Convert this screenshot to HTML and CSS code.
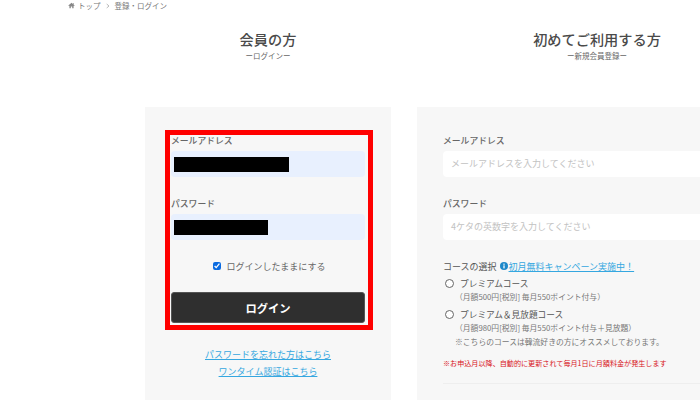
FILE: index.html
```html
<!DOCTYPE html>
<html lang="ja">
<head>
<meta charset="utf-8">
<title>登録・ログイン</title>
<link rel="stylesheet" href="styles.css">
</head>
<body>
<nav class="crumbs">
  <svg class="home" viewBox="0 0 10 10" width="7" height="7"><path d="M5 1 0.5 5 1.3 5.8 2 5.2V9H4V6.5H6V9H8V5.2L8.7 5.8 9.5 5 8 3.7V1.5H7V2.8Z" fill="#888"/></svg>
  <span>トップ</span>
  <svg class="chev" viewBox="0 0 6 8" width="4" height="6"><path d="M1 1 4.5 4 1 7" fill="none" stroke="#999" stroke-width="1"/></svg>
  <span class="crumb-last">登録・ログイン</span>
</nav>
<main class="columns">
  <section class="col col-left">
    <header class="head">
      <h2>会員の方</h2>
      <p>ーログインー</p>
    </header>
    <div class="panel">
      <div class="field">
        <label>メールアドレス</label>
        <div class="input filled"><span class="mask mask-a"></span></div>
      </div>
      <div class="field">
        <label>パスワード</label>
        <div class="input filled"><span class="mask mask-b"></span></div>
      </div>
      <div class="keep"><input type="checkbox" checked><span>ログインしたままにする</span></div>
      <button class="login">ログイン</button>
      <div class="links">
        <a>パスワードを忘れた方はこちら</a>
        <a>ワンタイム認証はこちら</a>
      </div>
      <div class="redbox"></div>
    </div>
  </section>
  <section class="col col-right">
    <header class="head">
      <h2>初めてご利用する方</h2>
      <p>ー新規会員登録ー</p>
    </header>
    <div class="panel">
      <div class="field">
        <label>メールアドレス</label>
        <div class="input">メールアドレスを入力してください</div>
      </div>
      <div class="field">
        <label>パスワード</label>
        <div class="input">4ケタの英数字を入力してください</div>
      </div>
      <div class="course-head">
        <span>コースの選択</span>
        <svg viewBox="0 0 10 10" width="8" height="8"><circle cx="5" cy="5" r="5" fill="#1e88c9"/><rect x="4.2" y="2" width="1.6" height="1.5" fill="#fff"/><rect x="4.2" y="4.2" width="1.6" height="3.8" fill="#fff"/></svg>
        <a>初月無料キャンペーン実施中！</a>
      </div>
      <div class="course">
        <div class="radio-row"><span class="radio"></span><span>プレミアムコース</span></div>
        <p>（月額500円[税別] 毎月550ポイント付与）</p>
      </div>
      <div class="course">
        <div class="radio-row"><span class="radio"></span><span>プレミアム＆見放題コース</span></div>
        <p>（月額980円[税別] 毎月550ポイント付与＋見放題）</p>
        <p>※こちらのコースは韓流好きの方にオススメしております。</p>
      </div>
      <p class="warn">※お申込月以降、自動的に更新されて毎月1日に月額料金が発生します</p>
      <hr class="rule">
    </div>
  </section>
</main>
</body>
</html>
```

FILE: styles.css
```css
html, body {
  margin: 0;
  width: 700px;
  height: 400px;
  overflow: hidden;
  background: #fff;
  font-family: "Noto Sans CJK JP", "Noto Sans", sans-serif;
  color: #555;
}
.crumbs {
  display: flex;
  align-items: center;
  height: 11px;
  padding-left: 68px;
  font-size: 7.5px;
  color: #777;
}
.home { margin-right: 3px; }
.chev { margin: 0 5px 0 5px; }
.columns {
  display: flex;
  gap: 26px;
  padding-left: 145px;
  margin-top: 18px;
}
.col-left { flex: 0 0 246px; }
.col-right { flex: 0 0 360px; }
.head {
  height: 78px;
  text-align: center;
}
.head h2 {
  margin: 0;
  font-size: 14.2px;
  line-height: 20px;
  font-weight: 500;
  color: #4a4a4a;
}
.head p {
  margin: 0;
  font-size: 7.5px;
  line-height: 14px;
  color: #666;
}
.panel {
  position: relative;
  background: #f7f7f7;
  height: 293px;
  padding: 26px;
  box-sizing: border-box;
}
.field { margin-bottom: 19px; }
.field label {
  display: block;
  height: 14px;
  line-height: 15px;
  margin-bottom: 4px;
  font-size: 8.8px;
  font-weight: 500;
  color: #666;
}
.input {
  height: 26px;
  line-height: 26px;
  padding-left: 8px;
  background: #fff;
  border-radius: 4px;
  font-size: 9px;
  color: #c2c2c2;
  display: flex;
  align-items: center;
}
.input.filled { background: #e8f0fe; padding-left: 3px; }
.mask { display: block; height: 15px; background: #000; }
.mask-a { width: 115px; }
.mask-b { width: 94px; }
.keep {
  display: flex;
  align-items: center;
  justify-content: center;
  gap: 6px;
  height: 14px;
  margin-top: 6px;
  padding-left: 2px;
  font-size: 9px;
  color: #666;
}
.keep input { margin: 0; width: 8px; height: 8px; accent-color: #0b6be0; }
.login {
  display: block;
  width: 100%;
  height: 31px;
  margin-top: 19px;
  padding: 0;
  border: 1px solid #555;
  border-radius: 3px;
  background: #2f2f2f;
  color: #fff;
  font: 700 11.3px "Noto Sans CJK JP", sans-serif;
}
.links {
  display: flex;
  flex-direction: column;
  align-items: center;
  gap: 4px;
  margin-top: 25px;
  font-size: 9px;
  line-height: 13px;
}
.links a, .course-head a {
  color: #35a7e0;
  text-decoration: underline;
}
.redbox {
  position: absolute;
  left: 20px;
  top: 23px;
  width: 208px;
  height: 200px;
  box-sizing: border-box;
  border: 5px solid #f00;
}
.course-head {
  display: flex;
  align-items: center;
  height: 14px;
  font-size: 9px;
  color: #555;
}
.course-head svg { margin: 0 1px 0 3px; }
.course-head a { font-size: 9px; }
.course { margin-top: 3px; padding-left: 2px; }
.radio-row {
  display: flex;
  align-items: center;
  gap: 6px;
  height: 14px;
  font-size: 8.7px;
  color: #555;
}
.radio {
  width: 7px;
  height: 7px;
  border: 1px solid #666;
  border-radius: 50%;
  background: #fff;
}
.course p {
  margin: 0 0 0 10px;
  font-size: 7.8px;
  line-height: 14px;
  color: #777;
}
.warn {
  margin: 8px 0 0;
  font-size: 7.1px;
  line-height: 12px;
  color: #d8141c;
}
.rule {
  margin: 14px 0 0;
  border: 0;
  border-top: 1px solid #eee;
}
```
